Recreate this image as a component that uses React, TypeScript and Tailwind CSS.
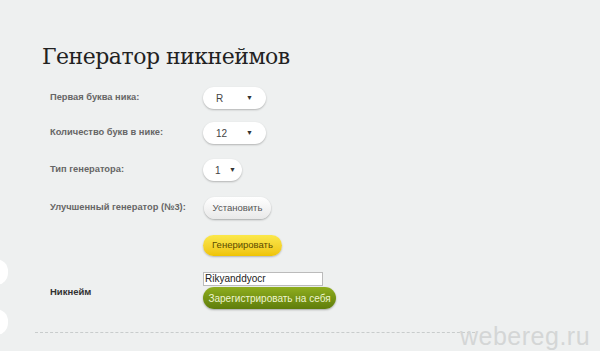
import React from "react";

const sel = "flex items-center justify-between rounded-full bg-white h-[22px] px-[13px] text-[10px] text-[#444] shadow-[0_1px_2px_rgba(0,0,0,0.25)]";
const lbl = "w-[153px] text-[9.3px] font-bold text-[#666]";

export default function App() {
  return (
    <div className="relative w-[600px] h-[351px] overflow-hidden bg-[#eef0f0]" style={{ fontFamily: '"Liberation Sans", Arial, sans-serif' }}>
      <div className="absolute left-[-16px] top-[259px] w-[24px] h-[26px] rounded-full bg-white" />
      <div className="absolute left-[-16px] top-[309px] w-[24px] h-[26px] rounded-full bg-white" />

      <div className="pt-[41px] pl-[42px]">
        <h1 className="text-[22px] leading-[32px] text-[#222] tracking-[-0.5px]" style={{ fontFamily: '"DejaVu Serif", "Liberation Serif", serif' }}>
          Генератор никнеймов
        </h1>
      </div>

      <div className="pl-[50px]">
        <div className="flex items-center mt-[14px]">
          <div className={lbl}>Первая буква ника:</div>
          <div className={sel + " w-[63px]"}><span>R</span><span className="text-[7px] text-[#333]">▼</span></div>
        </div>
        <div className="flex items-center mt-[13px]">
          <div className={lbl}>Количество букв в нике:</div>
          <div className={sel + " w-[63px]"}><span>12</span><span className="text-[7px] text-[#333]">▼</span></div>
        </div>
        <div className="flex items-center mt-[15px]">
          <div className={lbl}>Тип генератора:</div>
          <div className={sel + " w-[39px] pl-[12px] pr-[6px]"}><span>1</span><span className="text-[7px] text-[#333]">▼</span></div>
        </div>
        <div className="flex items-center mt-[16px]">
          <div className={lbl + " w-[154px]"}>Улучшенный генератор (№3):</div>
          <div className="flex items-center justify-center rounded-full bg-gradient-to-b from-white to-[#e9e9e9] h-[22px] w-[67px] text-[9.5px] text-[#555] shadow-[0_1px_2px_rgba(0,0,0,0.3)]">Установить</div>
        </div>
        <div className="flex items-center mt-[16px]">
          <div className="w-[153px]" />
          <div className="flex items-center justify-center rounded-full bg-gradient-to-b from-[#fbe84a] to-[#efc400] h-[21px] w-[79px] text-[9.5px] text-[#5a4a00] shadow-[0_1px_2px_rgba(0,0,0,0.25)]">Генерировать</div>
        </div>
        <div className="flex items-center mt-[16px]">
          <div className="w-[153px] text-[9.5px] font-bold text-[#333] pt-[3px]">Никнейм</div>
          <div className="flex flex-col">
            <div className="w-[120px] h-[14px] bg-white border border-[#bbb] text-[10px] leading-[12px] pl-[1px] text-[#222]">Rikyanddyocr</div>
            <div className="flex items-center justify-center rounded-full bg-gradient-to-b from-[#8fae1e] to-[#5f7d0b] h-[22px] w-[133px] text-[10px] text-[#eef5d0] shadow-[0_1px_2px_rgba(0,0,0,0.3)] mt-[1px]">Зарегистрировать на себя</div>
          </div>
        </div>
      </div>

      <div className="ml-[35px] mt-[23px] w-[440px] border-t border-dashed border-[#c8cccc]" />

      <div className="absolute left-[460px] top-[318px] text-[25px] text-[#d4d6d6] tracking-[0.5px]" style={{ fontFamily: '"Liberation Sans", Arial, sans-serif', fontWeight: 300 }}>webereg.ru</div>
    </div>
  );
}
